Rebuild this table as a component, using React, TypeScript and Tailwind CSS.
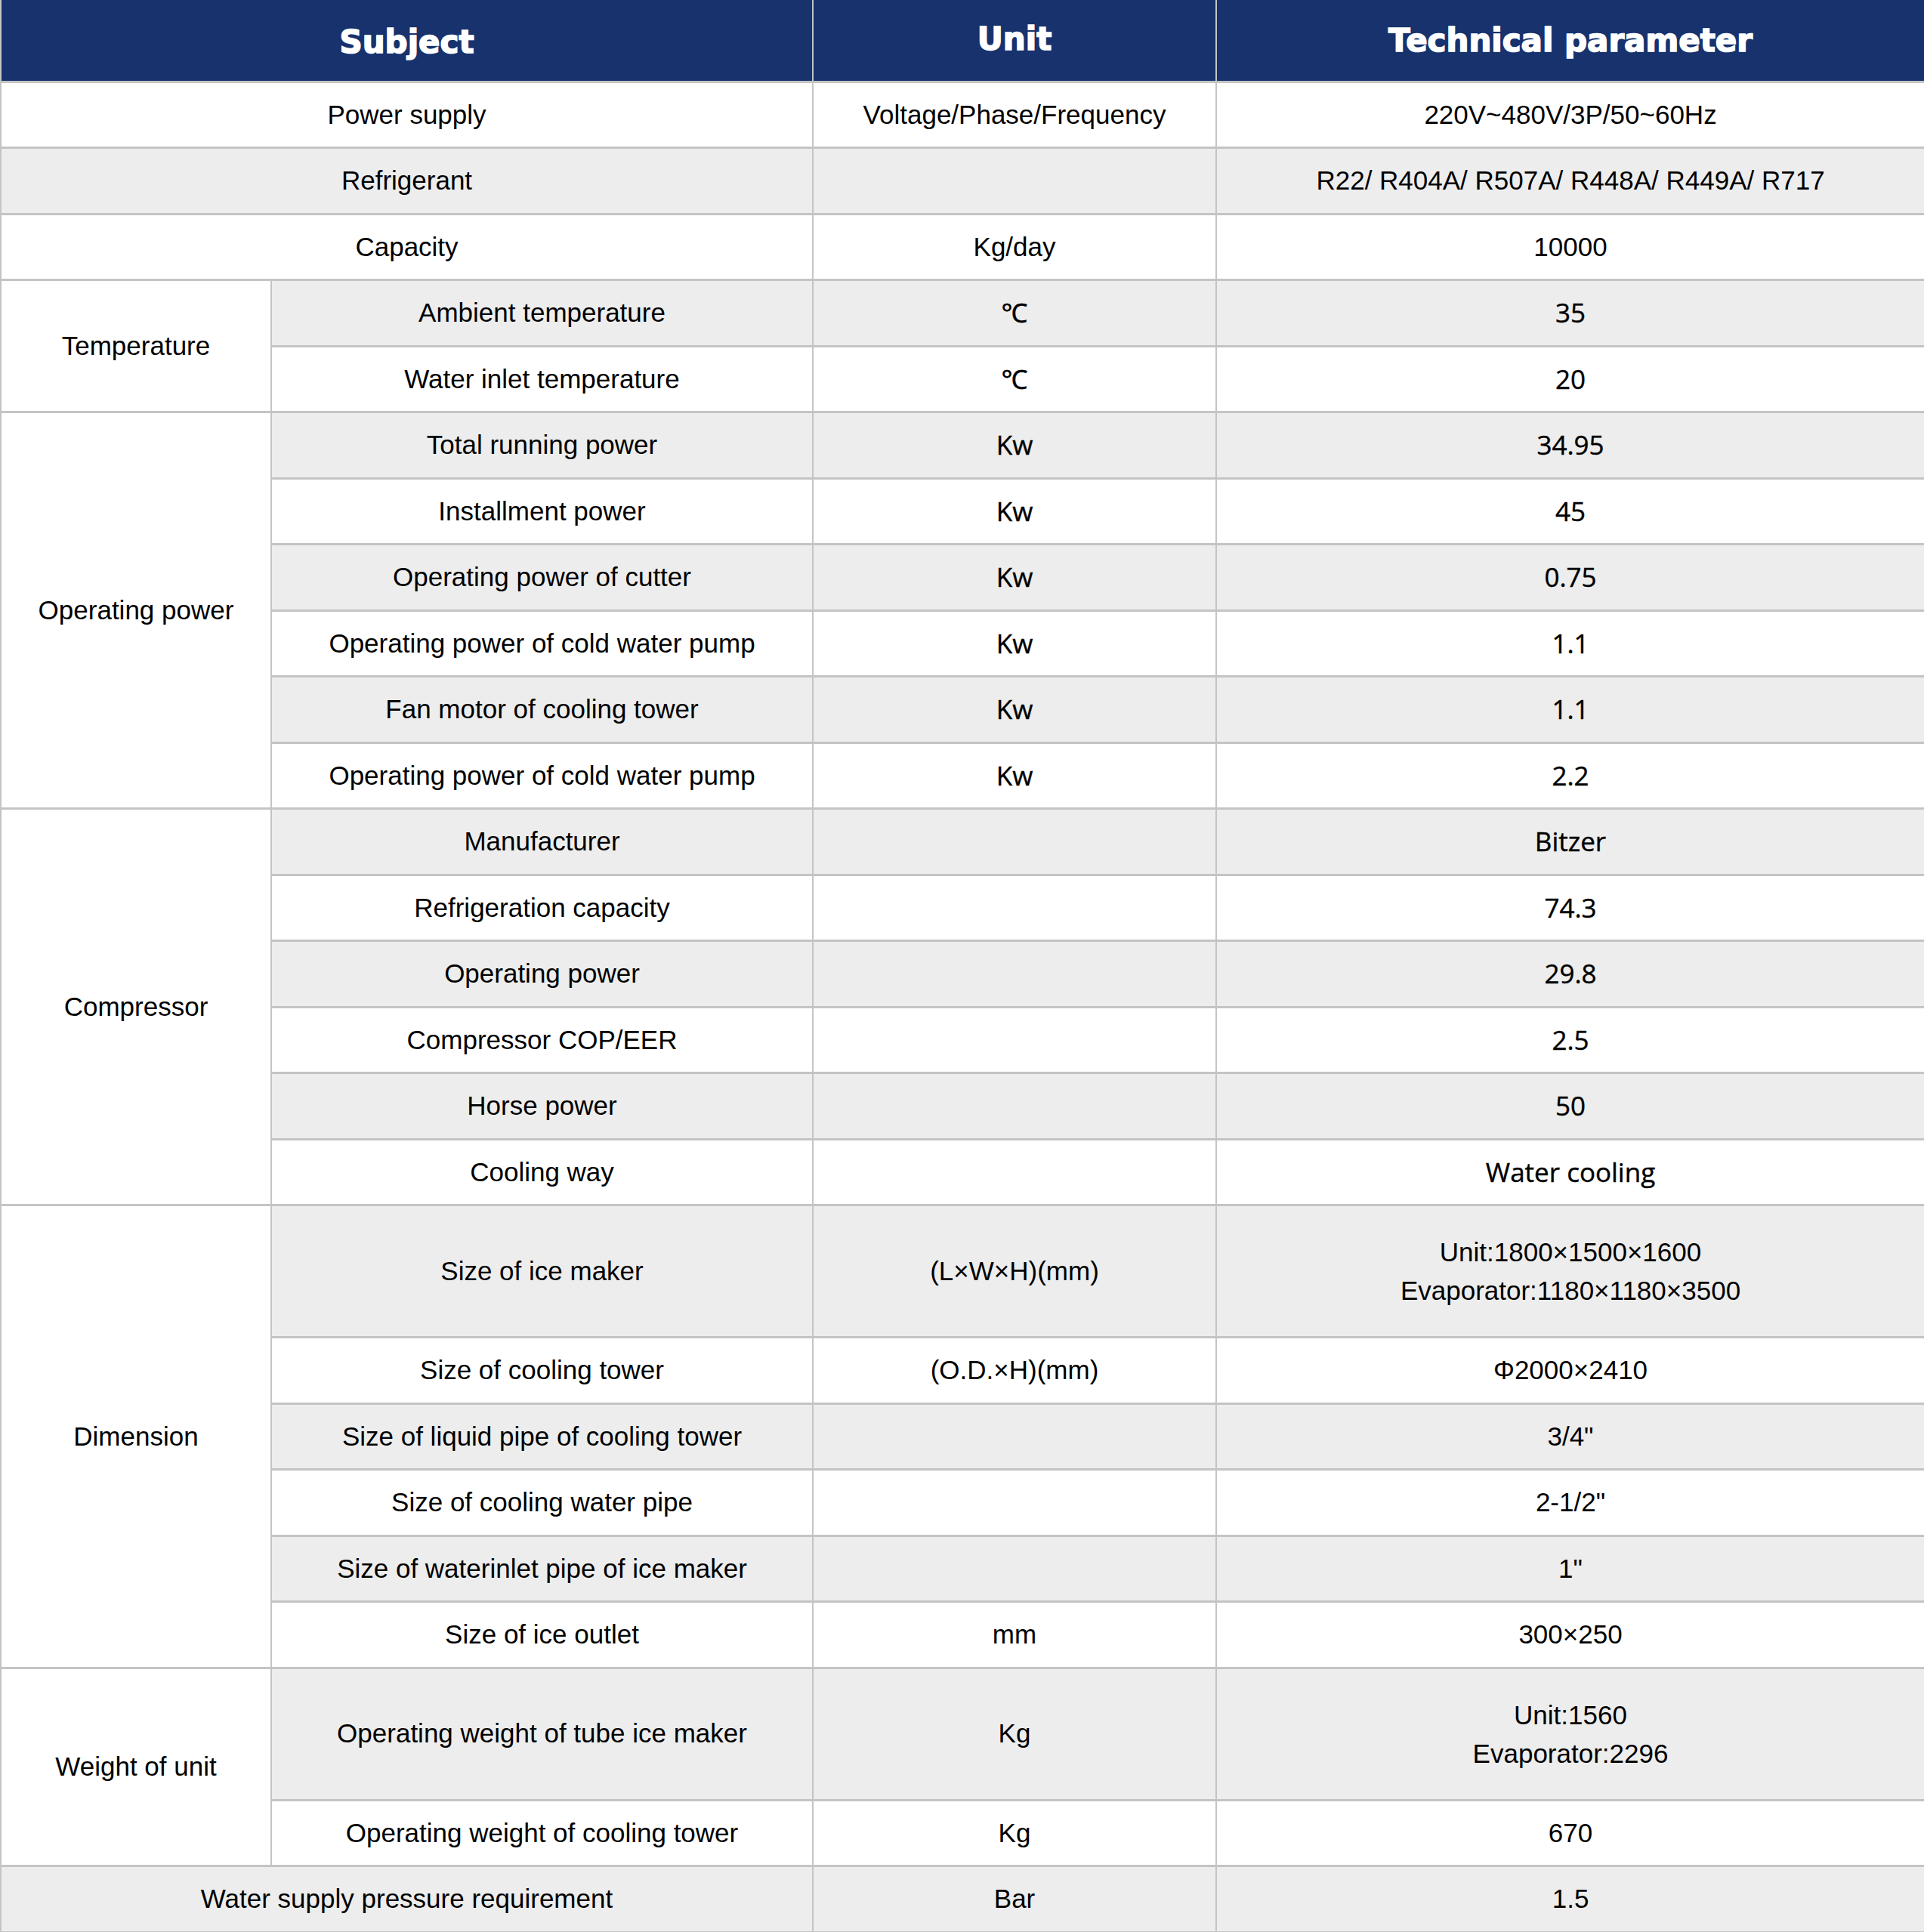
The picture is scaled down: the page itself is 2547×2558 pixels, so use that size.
type Row = {
  full?: string
  group?: string
  span?: number
  sub?: string
  unit: string
  value: string | string[]
  alt?: boolean
  tall?: boolean
}

const rows: Row[] = [
  { full: 'Power supply', unit: 'Voltage/Phase/Frequency', value: '220V~480V/3P/50~60Hz' },
  { full: 'Refrigerant', unit: '', value: 'R22/ R404A/ R507A/ R448A/ R449A/ R717' },
  { full: 'Capacity', unit: 'Kg/day', value: '10000' },
  { group: 'Temperature', span: 2, sub: 'Ambient temperature', unit: '℃', value: '35', alt: true },
  { sub: 'Water inlet temperature', unit: '℃', value: '20', alt: true },
  { group: 'Operating power', span: 6, sub: 'Total running power', unit: 'Kw', value: '34.95', alt: true },
  { sub: 'Installment power', unit: 'Kw', value: '45', alt: true },
  { sub: 'Operating power of cutter', unit: 'Kw', value: '0.75', alt: true },
  { sub: 'Operating power of cold water pump', unit: 'Kw', value: '1.1', alt: true },
  { sub: 'Fan motor of cooling tower', unit: 'Kw', value: '1.1', alt: true },
  { sub: 'Operating power of cold water pump', unit: 'Kw', value: '2.2', alt: true },
  { group: 'Compressor', span: 6, sub: 'Manufacturer', unit: '', value: 'Bitzer', alt: true },
  { sub: 'Refrigeration capacity', unit: '', value: '74.3', alt: true },
  { sub: 'Operating power', unit: '', value: '29.8', alt: true },
  { sub: 'Compressor COP/EER', unit: '', value: '2.5', alt: true },
  { sub: 'Horse power', unit: '', value: '50', alt: true },
  { sub: 'Cooling way', unit: '', value: 'Water cooling', alt: true },
  {
    group: 'Dimension',
    span: 6,
    sub: 'Size of ice maker',
    unit: '(L×W×H)(mm)',
    value: ['Unit:1800×1500×1600', 'Evaporator:1180×1180×3500'],
    tall: true,
  },
  { sub: 'Size of cooling tower', unit: '(O.D.×H)(mm)', value: 'Φ2000×2410' },
  { sub: 'Size of liquid pipe of cooling tower', unit: '', value: '3/4"' },
  { sub: 'Size of cooling water pipe', unit: '', value: '2-1/2"' },
  { sub: 'Size of waterinlet pipe of ice maker', unit: '', value: '1"' },
  { sub: 'Size of ice outlet', unit: 'mm', value: '300×250' },
  {
    group: 'Weight of unit',
    span: 2,
    sub: 'Operating weight of tube ice maker',
    unit: 'Kg',
    value: ['Unit:1560', 'Evaporator:2296'],
    tall: true,
  },
  { sub: 'Operating weight of cooling tower', unit: 'Kg', value: '670' },
  { full: 'Water supply pressure requirement', unit: 'Bar', value: '1.5' },
]

const cell = 'border-x-2 border-y-[3px] border-[#c4c4c4] text-center align-middle p-0'
const arial = "font-['Liberation_Sans',Arial,sans-serif]"
const open = "font-['Open_Sans','Noto_Sans',sans-serif] [-webkit-text-stroke:0.4px_black]"
const head = 'border-x-2 border-t-0 border-b-[3px] border-[#c4c4c4] align-middle'

export default function App() {
  return (
    <div className="w-[2547px] h-[2558px] overflow-hidden bg-white">
      <table className={`w-[2547px] table-fixed border-collapse text-[35px] text-black ${arial}`}>
        <colgroup>
          <col className="w-[358px]" />
          <col className="w-[717px]" />
          <col className="w-[534px]" />
          <col className="w-[938px]" />
        </colgroup>
        <thead>
          <tr className="h-[108px] bg-[#17326d] text-white text-[42px] font-bold font-['DejaVu_Sans',sans-serif] [-webkit-text-stroke:1.6px_white]">
            <th colSpan={2} className={`${head} pt-[4px]`}>
              Subject
            </th>
            <th className={`${head} pb-[4px]`}>Unit</th>
            <th className={head}>Technical parameter</th>
          </tr>
        </thead>
        <tbody>
          {rows.map((r, i) => {
            const bg = i % 2 === 1 ? 'bg-[#ededed]' : 'bg-white'
            const h = r.tall ? 'h-[175px]' : 'h-[87.5px]'
            const unitFont = r.alt && r.unit ? open : ''
            return (
              <tr key={i} className={h}>
                {r.full ? (
                  <td colSpan={2} className={`${cell} ${bg}`}>
                    {r.full}
                  </td>
                ) : (
                  <>
                    {r.group && (
                      <td rowSpan={r.span} className={`${cell} bg-white`}>
                        {r.group}
                      </td>
                    )}
                    <td className={`${cell} ${bg}`}>{r.sub}</td>
                  </>
                )}
                <td className={`${cell} ${bg} ${unitFont}`}>{r.unit}</td>
                <td className={`${cell} ${bg} ${r.alt ? open : ''}`}>
                  {Array.isArray(r.value) ? (
                    <div className="flex flex-col items-center leading-[51px]">
                      {r.value.map((v) => (
                        <span key={v}>{v}</span>
                      ))}
                    </div>
                  ) : (
                    r.value
                  )}
                </td>
              </tr>
            )
          })}
        </tbody>
      </table>
    </div>
  )
}
